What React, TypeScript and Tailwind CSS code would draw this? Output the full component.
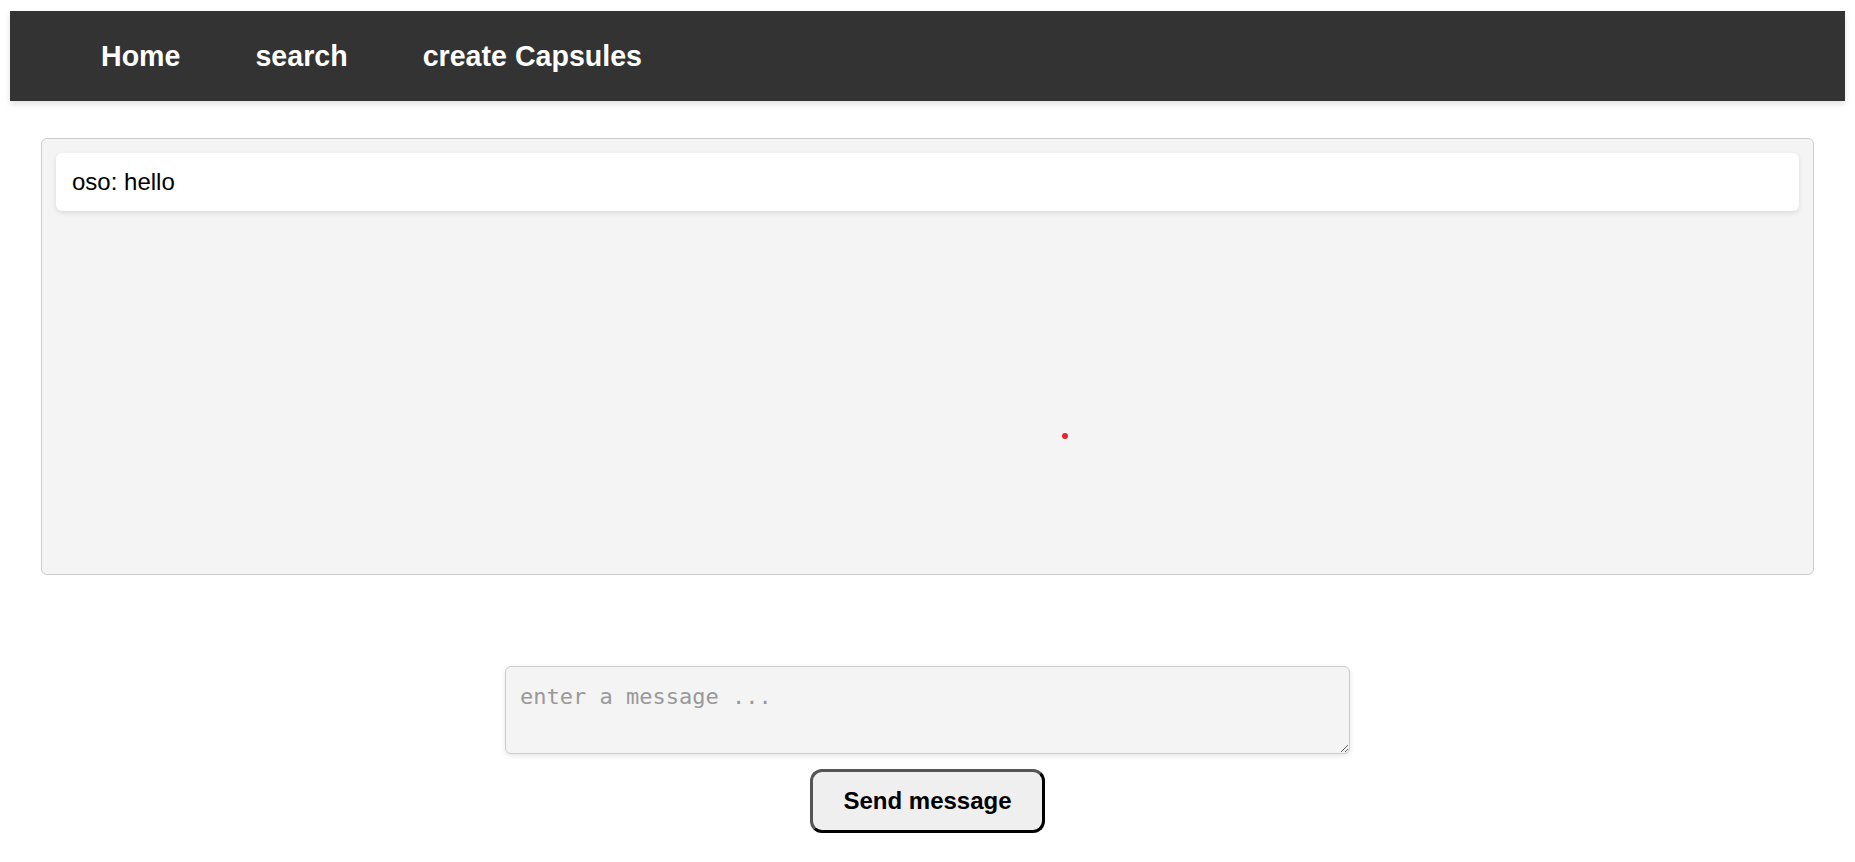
export default function App() {
  const links = ["Home", "search", "create Capsules"];

  return (
    <div className="mx-[10px] mt-[11px] font-['Liberation_Sans',Arial,sans-serif] text-black">
      <nav className="flex h-[90px] items-center gap-[75px] bg-[#333333] pl-[91px] shadow-[0_3px_6px_rgba(0,0,0,0.12)]">
        {links.map((link) => (
          <a key={link} href="#" className="text-[28.6px] font-bold text-white">
            {link}
          </a>
        ))}
      </nav>

      <div className="relative mx-[31px] mt-[37px] h-[437px] rounded-[6px] border border-[#cccccc] bg-[#f4f4f4] p-[14px]">
        <div className="rounded-[6px] bg-white px-[16px] py-[15px] text-[24px] leading-[28px] shadow-[0_2px_5px_rgba(0,0,0,0.1)]">
          oso: hello
        </div>
        <span className="absolute left-[1020px] top-[294px] h-[6px] w-[6px] rounded-full bg-[#e3262b]" />
      </div>

      <div className="mt-[91px] flex flex-col items-center gap-[15px]">
        <textarea
          placeholder="enter a message ..."
          className="block h-[88px] w-[845px] rounded-[6px] border border-[#cccccc] bg-[#f4f4f4] px-[14px] py-[13px] font-['DejaVu_Sans_Mono',monospace] text-[22px] shadow-[0_2px_5px_rgba(0,0,0,0.1)] outline-none placeholder:text-[#999999]"
        />
        <button
          type="button"
          className="h-[64px] w-[235px] rounded-[12px] border-[3px] border-b-black border-l-[#555555] border-r-black border-t-[#555555] bg-[#efefef] text-[24px] font-bold"
        >
          Send message
        </button>
      </div>
    </div>
  );
}
